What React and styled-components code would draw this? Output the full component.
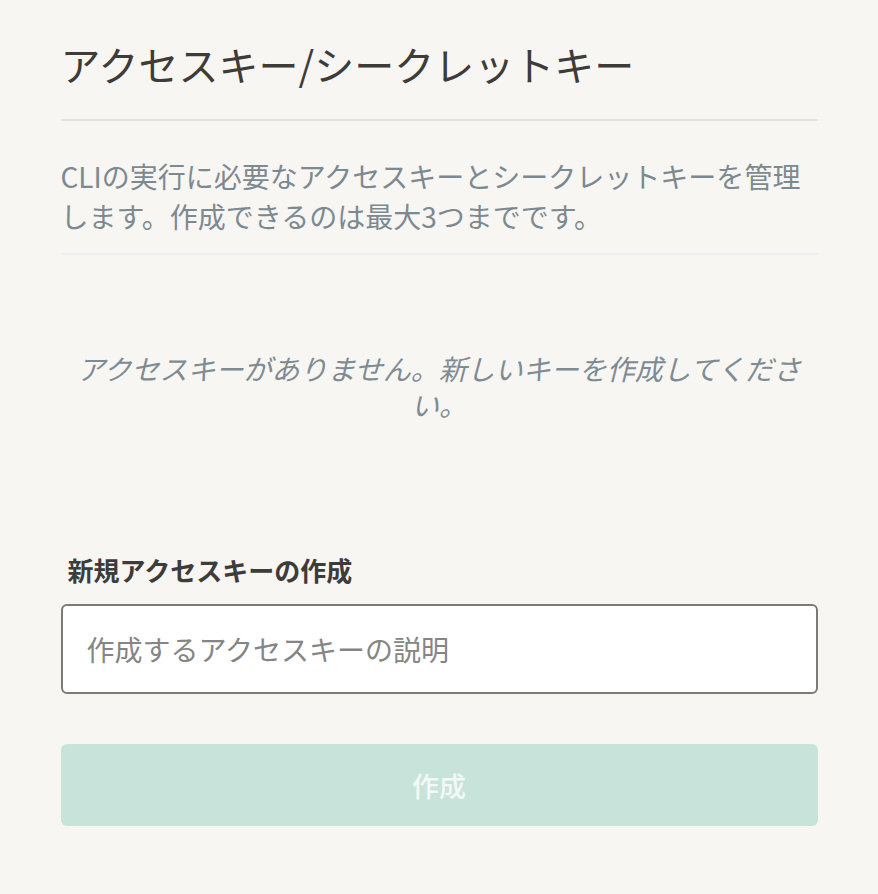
import styled, { createGlobalStyle } from "styled-components";

const GlobalStyle = createGlobalStyle`
  html, body {
    margin: 0;
    padding: 0;
    background: #f7f6f2;
  }
  body {
    font-family: "Noto Sans CJK JP", "Noto Sans", sans-serif;
  }
`;

const Page = styled.div`
  width: 757px;
  margin: 0 auto;
  padding-top: 34px;
  display: flex;
  flex-direction: column;
`;

const Title = styled.h1`
  margin: 0;
  font-size: 40px;
  font-weight: 400;
  line-height: 60px;
  color: #3d3c39;
  padding-bottom: 25px;
  border-bottom: 2px solid #e5e3de;
`;

const Description = styled.p`
  margin: 0;
  padding: 35px 0 17px;
  font-size: 28px;
  line-height: 40px;
  color: #7d8990;
  border-bottom: 2px solid #eceeef;
`;

const Empty = styled.p`
  margin: 0;
  padding: 95px 0 0;
  height: 297px;
  box-sizing: border-box;
  text-align: center;
  font-size: 28px;
  line-height: 36px;
  font-style: italic;
  color: #7f8b93;
`;

const Form = styled.form`
  display: flex;
  flex-direction: column;
`;

const Label = styled.label`
  font-size: 26px;
  font-weight: 700;
  line-height: 36px;
  color: #3d3c39;
  padding-left: 7px;
  margin-bottom: 16px;
`;

const Input = styled.input`
  height: 90px;
  box-sizing: border-box;
  border: 2px solid #7b7a75;
  border-radius: 6px;
  background: #ffffff;
  padding: 0 24px;
  font-family: inherit;
  font-size: 28px;
  color: #3d3c39;
  outline: none;

  &::placeholder {
    color: #858585;
  }
`;

const Submit = styled.button`
  margin-top: 50px;
  height: 82px;
  border: none;
  border-radius: 6px;
  background: #c8e4da;
  color: #f4f9f6;
  font-family: inherit;
  font-size: 27px;
  font-weight: 500;
  cursor: not-allowed;
`;

export default function App() {
  return (
    <>
      <GlobalStyle />
      <Page>
        <Title>アクセスキー/シークレットキー</Title>
        <Description>
          CLIの実行に必要なアクセスキーとシークレットキーを管理します。作成できるのは最大3つまでです。
        </Description>
        <Empty>アクセスキーがありません。新しいキーを作成してください。</Empty>
        <Form onSubmit={(e) => e.preventDefault()}>
          <Label htmlFor="desc">新規アクセスキーの作成</Label>
          <Input id="desc" placeholder="作成するアクセスキーの説明" />
          <Submit type="submit" disabled>
            作成
          </Submit>
        </Form>
      </Page>
    </>
  );
}
